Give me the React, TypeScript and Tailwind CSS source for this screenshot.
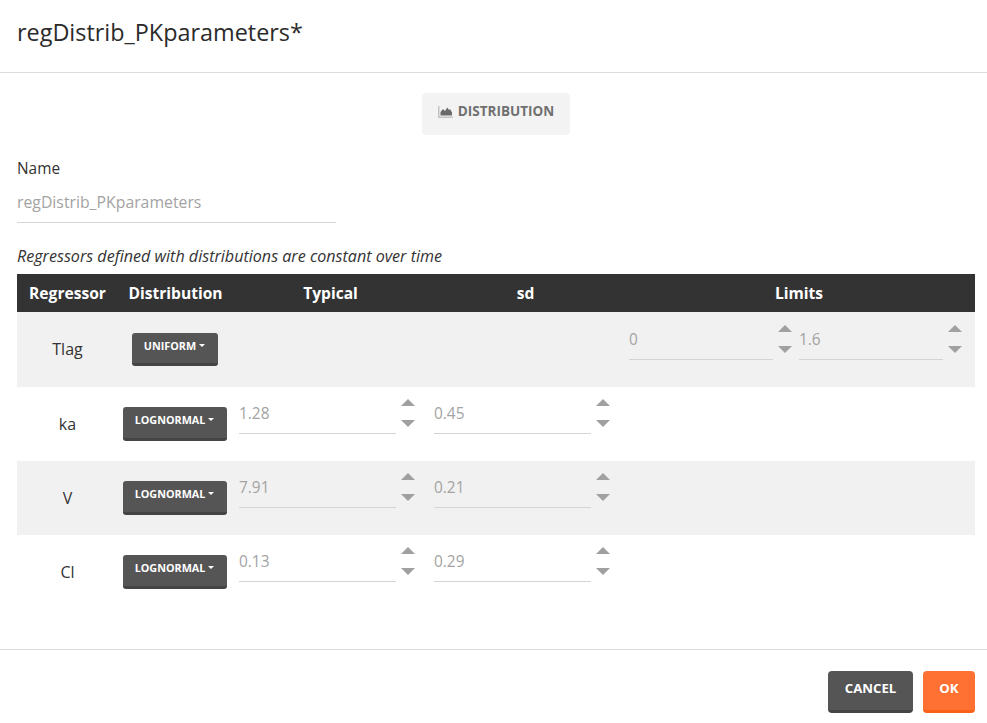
const font = "[font-family:'Open_Sans','Liberation_Sans',sans-serif]";

function ChartIcon() {
  return (
    <svg width="15" height="12" viewBox="0 0 15 12" className="mr-[5px] shrink-0">
      <path d="M0 0h1.5v10.5H15V12H0z" fill="#c4c4c4" />
      <path d="M2.5 9.5V6l2.5-3 2 2 2.3-3.5L11 4l1-1 2 3.5v3z" fill="#6b6b6b" />
    </svg>
  );
}

function Spinner({ value, width }: { value: string; width: string }) {
  return (
    <div className="flex items-start">
      <div className={`${width} h-[40px] border-b border-[#d4d4d4] pt-[7px] text-[15.4px] leading-[25px] text-[#a3a3a3]`}>
        {value}
      </div>
      <div className="flex w-[24px] shrink-0 flex-col items-center gap-[14px] pt-[5px]">
        <div className="h-0 w-0 border-x-[7px] border-b-[7px] border-x-transparent border-b-[#a0a0a0]" />
        <div className="h-0 w-0 border-x-[7px] border-t-[7px] border-x-transparent border-t-[#a0a0a0]" />
      </div>
    </div>
  );
}

function DistButton({ label, wide }: { label: string; wide?: boolean }) {
  return (
    <button
      className={`flex items-center justify-center rounded-[3px] border-b-[3px] border-[#444] bg-[#555] pb-[4px] text-[10.8px] font-bold text-white ${
        wide ? "h-[34px] w-[104px]" : "h-[33px] w-[86px]"
      }`}
    >
      {label}
      <span className="ml-[3px] h-0 w-0 -translate-y-[1px] border-x-[3.5px] border-t-[3.5px] border-x-transparent border-t-white" />
    </button>
  );
}

const rows = [
  { name: "ka", typical: "1.28", sd: "0.45" },
  { name: "V", typical: "7.91", sd: "0.21", shaded: true },
  { name: "Cl", typical: "0.13", sd: "0.29" },
];

const gridCols = "grid grid-cols-[101px_115px_195px_195px_1fr]";

export default function App() {
  return (
    <div className={`h-[723px] w-[987px] overflow-hidden bg-white text-[#333] ${font}`}>
      <div className="flex h-[73px] items-center border-b border-[#dcdcdc] px-[17px] pb-[6px] text-[23.4px] text-[#2b2b2b]">
        regDistrib_PKparameters*
      </div>

      <div className="h-[577px] border-b border-[#dcdcdc] pl-[17px] pr-[12px]">
        <div className="flex justify-center pt-[20px]">
          <div className="flex h-[42px] w-[148px] items-center justify-center rounded-[4px] bg-[#f3f3f3] pb-[5px] text-[13.5px] font-bold text-[#707070]">
            <ChartIcon />
            DISTRIBUTION
          </div>
        </div>

        <div className="mt-[22px] text-[15.4px] leading-[24px]">Name</div>
        <div className="mt-[9px] h-[33px] w-[319px] border-b border-[#d4d4d4] text-[15.8px] leading-[24px] text-[#a3a3a3]">
          regDistrib_PKparameters
        </div>

        <div className="mt-[21px] text-[16.1px] italic leading-[24px]">
          Regressors defined with distributions are constant over time
        </div>

        <div className="mt-[6px]">
          <div className={`${gridCols} h-[38px] items-center bg-[#333] pt-[2px] text-center text-[15.6px] font-bold text-white`}>
            <div>Regressor</div>
            <div>Distribution</div>
            <div>Typical</div>
            <div>sd</div>
            <div>Limits</div>
          </div>

          <div className={`${gridCols} h-[75px] bg-[#f1f1f1]`}>
            <div className="flex items-center justify-center pb-[2px] text-[16px]">Tlag</div>
            <div className="flex justify-center pr-[2px] pt-[21px]">
              <DistButton label="UNIFORM" />
            </div>
            <div />
            <div />
            <div className="flex gap-[2px] pl-[6px] pt-[8px]">
              <Spinner value="0" width="w-[144px]" />
              <Spinner value="1.6" width="w-[144px]" />
            </div>
          </div>

          {rows.map((r) => (
            <div key={r.name} className={`${gridCols} h-[74px] ${r.shaded ? "bg-[#f1f1f1]" : ""}`}>
              <div className="flex items-center justify-center text-[16px]">{r.name}</div>
              <div className="flex justify-center pr-[2px] pt-[20px]">
                <DistButton label="LOGNORMAL" wide />
              </div>
              <div className="pl-[6px] pt-[7px]">
                <Spinner value={r.typical} width="w-[157px]" />
              </div>
              <div className="pl-[6px] pt-[7px]">
                <Spinner value={r.sd} width="w-[157px]" />
              </div>
              <div />
            </div>
          ))}
        </div>
      </div>

      <div className="flex justify-end gap-[10px] px-[12px] pt-[21px]">
        <button className="h-[42px] w-[85px] rounded-[4px] border-b-[3px] border-[#444] bg-[#555] pb-[3px] text-[13.2px] font-bold text-white">
          CANCEL
        </button>
        <button className="h-[42px] w-[52px] rounded-[4px] border-b-[3px] border-[#f96116] bg-[#ff7033] pb-[3px] text-[13.2px] font-bold text-white">
          OK
        </button>
      </div>
    </div>
  );
}
